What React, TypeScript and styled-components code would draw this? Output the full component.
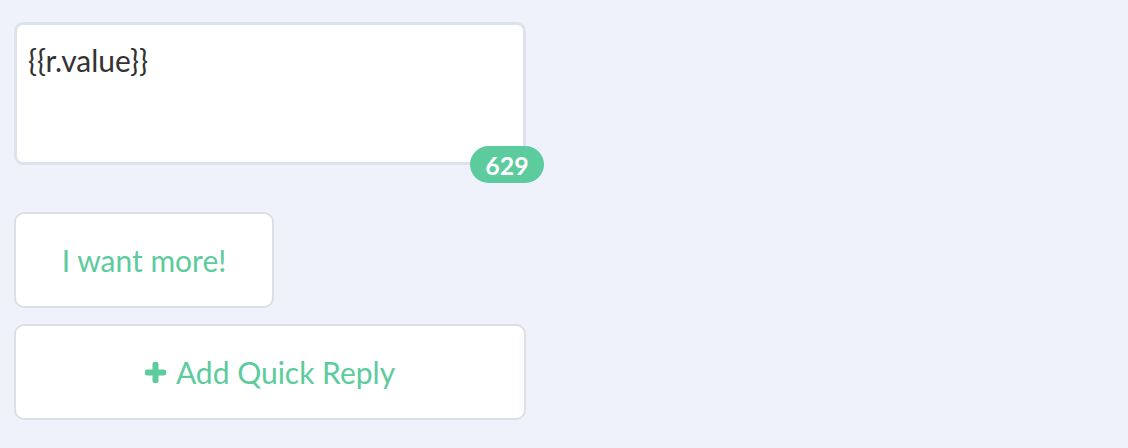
import { createGlobalStyle } from "styled-components";
import styled from "styled-components";

const GlobalStyle = createGlobalStyle`
  html, body {
    margin: 0;
    padding: 0;
    background-color: #eff2fa;
    font-family: Lato, "Open Sans", sans-serif;
  }
`;

const Page = styled.div`
  display: flex;
  flex-direction: column;
  align-items: flex-start;
  padding: 22px 14px;
`;

const EditorWrap = styled.div`
  position: relative;
  width: 512px;
  margin-bottom: 47px;
`;

const TextBox = styled.div`
  box-sizing: border-box;
  width: 512px;
  height: 143px;
  padding: 14px 11px;
  background-color: #ffffff;
  border: 3px solid #dde3ed;
  border-radius: 9px;
  font-size: 30px;
  line-height: 42px;
  color: #333333;
`;

const Counter = styled.span`
  position: absolute;
  right: -18px;
  bottom: -18px;
  display: flex;
  align-items: center;
  justify-content: center;
  min-width: 74px;
  height: 37px;
  box-sizing: border-box;
  padding: 0 14px;
  border-radius: 19px;
  background-color: #5ccb9e;
  color: #ffffff;
  font-size: 25px;
  font-weight: 700;
`;

const ReplyList = styled.div`
  display: flex;
  flex-direction: column;
  gap: 16px;
`;

const ReplyButton = styled.button<{ wide?: boolean }>`
  display: flex;
  align-items: center;
  justify-content: center;
  gap: 10px;
  box-sizing: border-box;
  width: ${({ wide }) => (wide ? "512px" : "260px")};
  height: 96px;
  padding: 0;
  background-color: #ffffff;
  border: 2px solid #dcdfe4;
  border-radius: 10px;
  font-family: Lato, "Open Sans", sans-serif;
  font-size: 30px;
  color: #5ccb9e;
  cursor: pointer;
`;

const PlusIcon = () => (
  <svg width="21" height="21" viewBox="0 0 21 21">
    <path
      d="M10.5 2.5v16M2.5 10.5h16"
      stroke="#5ccb9e"
      strokeWidth="6"
      strokeLinecap="round"
    />
  </svg>
);

export default function App() {
  return (
    <>
      <GlobalStyle />
      <Page>
        <EditorWrap>
          <TextBox>{"{{r.value}}"}</TextBox>
          <Counter>629</Counter>
        </EditorWrap>
        <ReplyList>
          <ReplyButton>I want more!</ReplyButton>
          <ReplyButton wide>
            <PlusIcon />
            Add Quick Reply
          </ReplyButton>
        </ReplyList>
      </Page>
    </>
  );
}
